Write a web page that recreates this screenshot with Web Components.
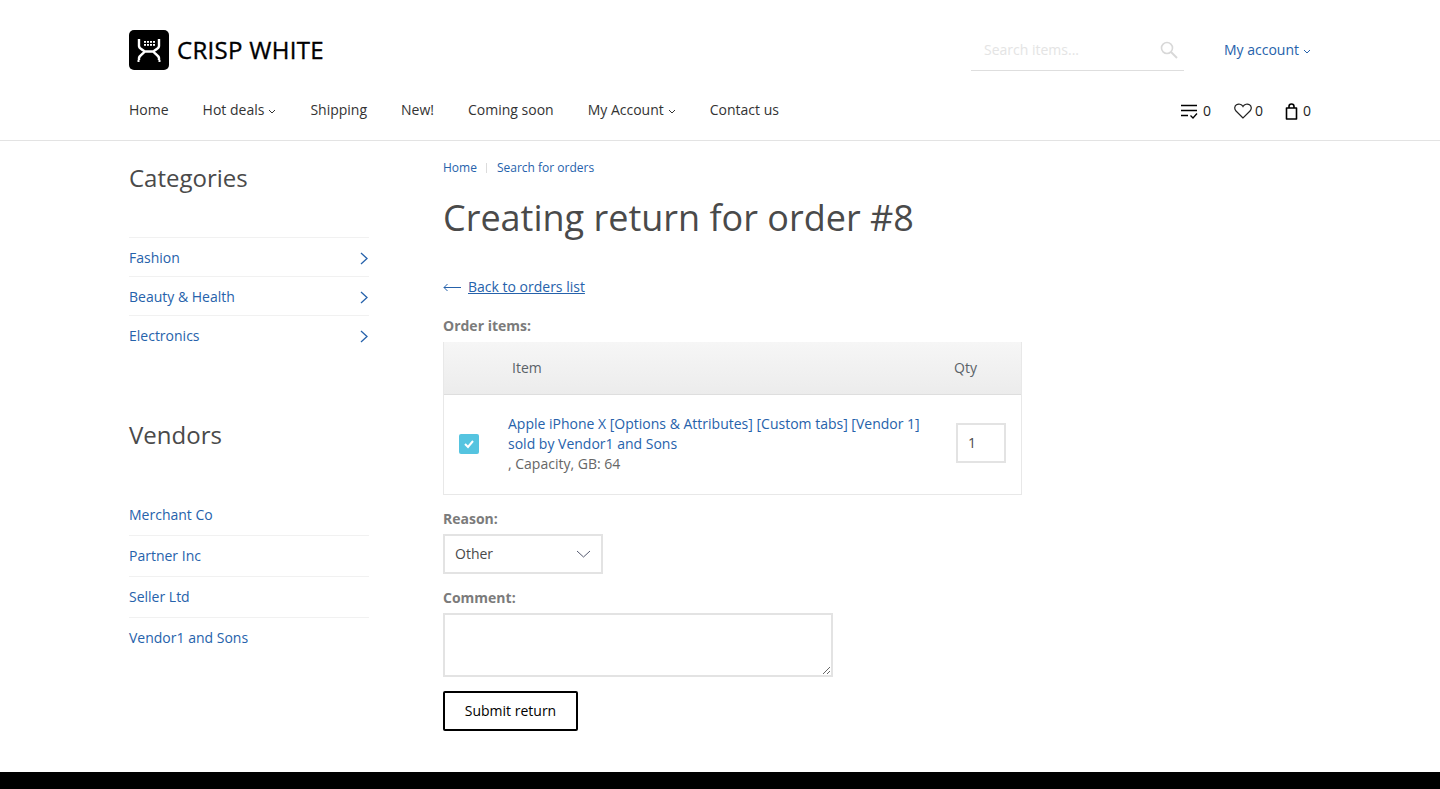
<!DOCTYPE html>
<html lang="en">
<head>
<meta charset="utf-8">
<title>Creating return for order #8</title>
<style>
  html, body { margin: 0; padding: 0; background: #fff; }
  body { font: 14px/20px "Open Sans", "Liberation Sans", sans-serif; color: #4a4a4a; height: 789px; overflow: hidden; }
</style>
</head>
<body>
<crisp-header></crisp-header>
<crisp-page>
  <div slot="side">
    <side-list heading="Categories" items="Fashion|Beauty &amp; Health|Electronics" arrows></side-list>
    <side-list heading="Vendors" items="Merchant Co|Partner Inc|Seller Ltd|Vendor1 and Sons"></side-list>
  </div>
  <return-form></return-form>
</crisp-page>
<crisp-footer></crisp-footer>

<script>
const caret = `<svg width="8" height="5" viewBox="0 0 8 5" fill="none" stroke="currentColor" stroke-width="1"><path d="M1 1l3 3 3-3"/></svg>`;

class CrispHeader extends HTMLElement {
  constructor() {
    super();
    this.attachShadow({ mode: "open" }).innerHTML = `
      <style>
        :host { display: block; height: 140px; border-bottom: 1px solid #e3e3e3; }
        .wrap { width: 1182px; margin: 0 auto; }
        .top { display: flex; align-items: center; height: 40px; padding-top: 30px; }
        .logo { display: flex; align-items: center; gap: 8px; font-size: 24px; letter-spacing: .3px; -webkit-text-stroke: .35px #000; color: #000; }
        .logo svg { display: block; }
        .search { margin-left: auto; align-self: flex-start; width: 213px; height: 41px; box-sizing: border-box; border-bottom: 1px solid #dedede;
          display: flex; align-items: center; justify-content: space-between; padding: 0 6px 1px 13px; color: #e4e4e4; }
        .account { margin-left: 40px; color: #2662ab; display: flex; align-items: center; gap: 4px; }
        .account svg { margin-top: 2px; }
        .bottom { display: flex; align-items: center; margin-top: 20px; height: 40px; color: #333; }
        .menu { display: flex; gap: 34px; }
        .menu span { display: flex; align-items: center; gap: 4px; }
        .menu svg { margin-top: 2px; }
        .counts { margin-left: auto; display: flex; gap: 22px; color: #222; padding-top: 2px; }
        .counts span { display: flex; align-items: center; gap: 4px; }
        .counts span:first-child { gap: 5px; margin-right: 1px; }
        .counts span:nth-child(2) { gap: 3px; }
        .counts svg { display: block; }
      </style>
      <div class="wrap">
        <div class="top">
          <div class="logo">
            <svg width="40" height="40" viewBox="0 0 40 40">
              <rect width="40" height="40" rx="5" fill="#000"/>
              <path d="M10 9v7c0 3 4 3.500 5.500 5.500h9c1.500-2 5.500-2.500 5.500-5.500V9" fill="none" stroke="#fff" stroke-width="2.400"/>
              <path d="M15.500 21.500c-1 2.500-5 3.500-5.500 6.500v2M24.500 21.500c1 2.500 5 3.500 5.500 6.500v2" fill="none" stroke="#fff" stroke-width="2.400"/>
              <path d="M10.500 31H8.500M29.500 31h2" fill="none" stroke="#fff" stroke-width="1.800"/>
              <g fill="#fff">
                <rect x="15" y="11" width="2" height="1.800"/><rect x="18" y="11" width="2" height="1.800"/><rect x="21" y="11" width="2" height="1.800"/><rect x="24" y="11" width="2" height="1.800"/>
                <rect x="15" y="14" width="2" height="1.800"/><rect x="18" y="14" width="2" height="1.800"/><rect x="21" y="14" width="2" height="1.800"/><rect x="24" y="14" width="2" height="1.800"/>
              </g>
            </svg>
            <span>CRISP WHITE</span>
          </div>
          <div class="search">
            <span>Search items...</span>
            <svg width="18" height="18" viewBox="0 0 18 18" fill="none" stroke="#d8d8d8" stroke-width="1.600"><circle cx="7" cy="7" r="5.500"/><path d="M11 11l6 6" stroke-width="2"/></svg>
          </div>
          <div class="account">My account ${caret}</div>
        </div>
        <div class="bottom">
          <div class="menu">
            <span>Home</span>
            <span>Hot deals ${caret}</span>
            <span>Shipping</span>
            <span>New!</span>
            <span>Coming soon</span>
            <span>My Account ${caret}</span>
            <span>Contact us</span>
          </div>
          <div class="counts">
            <span><svg width="17" height="15" viewBox="0 0 17 15" fill="none" stroke="#000" stroke-width="1.500"><path d="M0 1.500h16M0 6.500h16M0 11.500h7"/><path d="M9.500 11.500l2.500 2.500 4-4.500" stroke-width="1.300"/></svg>0</span>
            <span><svg width="18" height="16" viewBox="0 0 18 16" fill="none" stroke="#222" stroke-width="1.200"><path d="M9 15L2 8C0 6 .5 3 2.500 1.800 4.500.6 7.500 1 9 3.500 10.500 1 13.500.6 15.500 1.800 17.500 3 18 6 16 8z"/></svg>0</span>
            <span><svg width="14" height="17" viewBox="0 0 14 17" fill="none" stroke="#000" stroke-width="1.600"><path d="M1.500 5h10v11h-10z" stroke-linejoin="round"/><path d="M4 5V3.500a2.500 2.500 0 0 1 5 0V5"/></svg>0</span>
          </div>
        </div>
      </div>`;
  }
}
customElements.define("crisp-header", CrispHeader);

class CrispPage extends HTMLElement {
  constructor() {
    super();
    this.attachShadow({ mode: "open" }).innerHTML = `
      <style>
        :host { display: block; }
        .wrap { width: 1182px; height: 631px; margin: 0 auto; display: flex; gap: 74px; }
        .side { width: 240px; flex: none; }
        .main { flex: 1; min-width: 0; }
      </style>
      <div class="wrap">
        <div class="side"><slot name="side"></slot></div>
        <div class="main"><slot></slot></div>
      </div>`;
  }
}
customElements.define("crisp-page", CrispPage);

class SideList extends HTMLElement {
  connectedCallback() {
    const arrows = this.hasAttribute("arrows");
    const rows = this.getAttribute("items").split("|").map(t => `
      <div class="row">
        <span>${t.replace("&", "&amp;")}</span>
        ${arrows ? `<svg width="8" height="13" viewBox="0 0 8 13" fill="none" stroke="#2662ab" stroke-width="1.300"><path d="M1 1l6 5.500L1 12"/></svg>` : ""}
      </div>`).join("");
    this.attachShadow({ mode: "open" }).innerHTML = `
      <style>
        :host { display: block; padding-top: 21px; height: ${arrows ? 257 : 300}px; box-sizing: border-box; }
        h2 { margin: 0 0 43px; font-size: 24px; line-height: 32px; font-weight: 400; color: #4a4a4a; }
        .row { display: flex; align-items: center; justify-content: space-between; color: #2662ab;
          border-top: 1px solid #f1f1f1; height: ${arrows ? 36 : 40}px; padding-top: ${arrows ? 2 : 0}px; padding-right: ${arrows ? 1 : 0}px; }
        .row:first-of-type { ${arrows ? "" : "border-top-color: transparent;"} }
      </style>
      <h2>${this.getAttribute("heading")}</h2>
      ${rows}`;
  }
}
customElements.define("side-list", SideList);

class ReturnForm extends HTMLElement {
  constructor() {
    super();
    this.attachShadow({ mode: "open" }).innerHTML = `
      <style>
        :host { display: block; width: 579px; color: #4a4a4a; }
        a { color: #2662ab; }
        .crumbs { display: flex; align-items: center; height: 16px; margin-top: 19px; font-size: 12px; line-height: 16px; color: #2662ab; }
        .crumbs i { width: 1px; height: 10px; background: #dcdcdc; margin: 0 9.500px; }
        h1 { margin: 17px 0 0; font-size: 36px; line-height: 50px; font-weight: 400; color: #4a4a4a; }
        .back { display: flex; align-items: center; gap: 7px; margin-top: 34px; height: 20px; }
        label { display: block; font-weight: 700; color: #7b7b7b; height: 20px; }
        .items-label { margin-top: 19px; margin-bottom: 6px; }
        .table { border: 1px solid #e8e8e8; border-top: 0; height: 152px; }
        .head { display: flex; align-items: center; height: 52px; border-bottom: 1px solid #dedede;
          background: linear-gradient(#f6f6f6, #ececec); color: #5a6268; }
        .head .item { margin-left: 68px; }
        .head .qty { margin-left: auto; margin-right: 44px; }
        .body { display: flex; align-items: center; height: 98px; }
        .check { width: 20px; height: 20px; border-radius: 2px; background: #55c4e0; margin-left: 15px; display: flex; align-items: center; justify-content: center; flex: none; }
        .desc { margin-left: 29px; width: 430px; }
        .desc div { color: #666; }
        .input { box-sizing: border-box; width: 50px; height: 40px; border: 2px solid #e3e3e3; margin: 0 0 2px 18px; padding-left: 10px; line-height: 36px; color: #4a4a4a; }
        .reason-label { margin-top: 14px; }
        .select { box-sizing: border-box; width: 160px; height: 40px; margin-top: 5px; border: 2px solid #e3e3e3; display: flex; align-items: center; justify-content: space-between; padding: 0 10px; }
        .comment-label { margin-top: 14px; }
        textarea { display: block; box-sizing: border-box; width: 390px; height: 64px; margin: 5px 0 0; border: 2px solid #e3e3e3; outline: 0; }
        .submit { box-sizing: border-box; width: 135px; height: 40px; margin-top: 14px; border: 2px solid #000; border-radius: 2px; background: #fff; color: #000;
          font: inherit; padding: 0; display: block; }
      </style>
      <div class="crumbs"><span>Home</span><i></i><span>Search for orders</span></div>
      <h1>Creating return for order #8</h1>
      <div class="back">
        <svg width="18" height="9" viewBox="0 0 18 9" fill="none" stroke="#2662ab" stroke-width="1"><path d="M18 4.500H1M4.500 1L1 4.500 4.500 8"/></svg>
        <a href="#">Back to orders list</a>
      </div>
      <label class="items-label">Order items:</label>
      <div class="table">
        <div class="head"><span class="item">Item</span><span class="qty">Qty</span></div>
        <div class="body">
          <span class="check"><svg width="12" height="10" viewBox="0 0 12 10" fill="none" stroke="#fff" stroke-width="2"><path d="M2 5l3 3 5-6"/></svg></span>
          <div class="desc">
            <span style="color:#2662ab">Apple iPhone X [Options &amp; Attributes] [Custom tabs] [Vendor 1]<br>sold by Vendor1 and Sons</span>
            <div>, Capacity, GB: 64</div>
          </div>
          <div class="input">1</div>
        </div>
      </div>
      <label class="reason-label">Reason:</label>
      <div class="select"><span>Other</span>
        <svg width="15" height="8" viewBox="0 0 15 8" fill="none" stroke="#555a70" stroke-width="1"><path d="M1 1l6.500 6L14 1"/></svg>
      </div>
      <label class="comment-label">Comment:</label>
      <textarea></textarea>
      <button class="submit">Submit return</button>`;
  }
}
customElements.define("return-form", ReturnForm);

class CrispFooter extends HTMLElement {
  constructor() {
    super();
    this.attachShadow({ mode: "open" }).innerHTML = `
      <style>:host { display: block; height: 17px; background: #000; }</style>`;
  }
}
customElements.define("crisp-footer", CrispFooter);
</script>
</body>
</html>
